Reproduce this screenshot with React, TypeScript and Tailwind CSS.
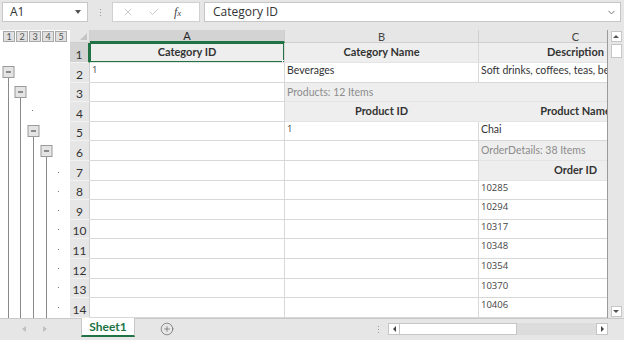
import React from "react";
import { X, Check, ChevronDown, CirclePlus } from "lucide-react";

type Cell = { t?: string; kind?: "head" | "num" | "text" | "caption"; merge?: boolean };

const rows: { h: number; cells: Cell[] }[] = [
  { h: 20, cells: [{ t: "Category ID", kind: "head" }, { t: "Category Name", kind: "head" }, { t: "Description", kind: "head" }] },
  { h: 20, cells: [{ t: "1", kind: "num" }, { t: "Beverages" }, { t: "Soft drinks, coffees, teas, beers, and ales" }] },
  { h: 19, cells: [{}, { t: "Products: 12 Items", kind: "caption", merge: true }, { kind: "caption" }] },
  { h: 20, cells: [{}, { t: "Product ID", kind: "head", merge: true }, { t: "Product Name", kind: "head" }] },
  { h: 19, cells: [{}, { t: "1", kind: "num" }, { t: "Chai" }] },
  { h: 20, cells: [{}, {}, { t: "OrderDetails: 38 Items", kind: "caption" }] },
  { h: 20, cells: [{}, {}, { t: "Order ID", kind: "head" }] },
  { h: 19, cells: [{}, {}, { t: "10285", kind: "num" }] },
  { h: 20, cells: [{}, {}, { t: "10294", kind: "num" }] },
  { h: 19, cells: [{}, {}, { t: "10317", kind: "num" }] },
  { h: 20, cells: [{}, {}, { t: "10348", kind: "num" }] },
  { h: 20, cells: [{}, {}, { t: "10354", kind: "num" }] },
  { h: 19, cells: [{}, {}, { t: "10370", kind: "num" }] },
  { h: 20, cells: [{}, {}, { t: "10406", kind: "num" }] },
];

const colW = ["w-[195px]", "w-[194px]", "w-[194px]"];

const OutlineBox = ({ x, y }: { x: number; y: number }) => (
  <g>
    <rect x={x} y={y} width="11" height="11" fill="#e4e4e4" stroke="#9a9a9a" />
    <line x1={x + 3} y1={y + 5.5} x2={x + 8} y2={y + 5.5} stroke="#333" />
  </g>
);

const Outline = () => {
  const dotsY = [129, 148, 167, 186, 206, 225, 244, 264];
  return (
    <svg width="70" height="275" className="block">
      <line x1="8.5" y1="35" x2="8.5" y2="275" stroke="#8a8a8a" />
      <line x1="20.5" y1="55" x2="20.5" y2="275" stroke="#8a8a8a" />
      <line x1="33.5" y1="94" x2="33.5" y2="275" stroke="#8a8a8a" />
      <line x1="46.5" y1="114" x2="46.5" y2="275" stroke="#8a8a8a" />
      <OutlineBox x={3} y={23.5} />
      <OutlineBox x={15} y={43.5} />
      <rect x="32" y="67" width="1" height="1" fill="#777" />
      <OutlineBox x={28} y={82.5} />
      <OutlineBox x={41} y={102.5} />
      {dotsY.map((y) => (
        <rect key={y} x="58" y={y} width="1" height="1" fill="#777" />
      ))}
    </svg>
  );
};

const DataCell = ({ c, i, row }: { c: Cell; i: number; row: number }) => {
  const gray = c.kind === "head" || c.kind === "caption";
  const selected = row === 0 && i === 0;
  let cls = `${colW[i]} shrink-0 h-full flex overflow-hidden whitespace-nowrap border-b `;
  cls += c.merge ? "border-r border-r-transparent " : "border-r border-r-[#d8d8d8] ";
  cls += gray ? "bg-[#eeeeee] border-b-[#e4e4e4] " : "bg-white border-b-[#d8d8d8] ";
  if (c.kind === "head") cls += "items-center justify-center font-bold text-[11px] text-[#333]";
  else if (c.kind === "caption") cls += "items-start pt-[2px] pl-[2px] text-[10.5px] text-[#8c8c8c]";
  else if (c.kind === "num") cls += "items-start pt-0 pl-[2px] text-[9.5px] text-[#444] font-['Open_Sans',sans-serif]";
  else cls += "items-start pt-0 pl-[2px] text-[10.5px] text-[#333]";
  return (
    <div className={`${cls} ${selected ? "relative" : ""}`}>
      {c.t}
      {selected && (
        <>
          <div className="absolute inset-[-1px] border-2 border-[#217346]" />
          <div className="absolute right-[-3px] bottom-[-3px] w-[5px] h-[5px] bg-[#217346] border border-white" />
        </>
      )}
    </div>
  );
};

export default function App() {
  return (
    <div className="w-[624px] h-[340px] bg-[#e6e6e6] flex flex-col overflow-hidden font-['Lato',sans-serif] text-[#333]">
      {/* formula bar */}
      <div className="h-[30px] shrink-0 flex items-start pt-[2px] pl-[2px] font-['Open_Sans',sans-serif]">
        <div className="w-[86px] h-[20px] bg-white border border-[#c6c6c6] flex items-center pl-[7px] pr-[6px] text-[12px]">
          <span className="flex-1">A1</span>
          <span className="w-0 h-0 border-l-[3px] border-r-[3px] border-t-[4px] border-l-transparent border-r-transparent border-t-[#555]" />
        </div>
        <div className="w-[24px] h-[20px] flex flex-col items-center justify-center gap-[2px]">
          <span className="w-[1px] h-[1px] bg-[#999]" />
          <span className="w-[1px] h-[1px] bg-[#999]" />
          <span className="w-[1px] h-[1px] bg-[#999]" />
        </div>
        <div className="w-[88px] h-[20px] bg-white border border-[#d0d0d0] flex items-center pl-[9px] gap-[14px]">
          <X size={12} strokeWidth={1.4} color="#b5b5b5" />
          <Check size={12} strokeWidth={1.4} color="#b5b5b5" />
          <span className="font-['Liberation_Serif',serif] italic text-[12px] text-[#444]">
            f<span className="text-[9px]">x</span>
          </span>
        </div>
        <div className="ml-[4px] w-[417px] h-[20px] bg-white border border-[#c6c6c6] flex items-center pl-[8px] pr-[3px] text-[12px]">
          <span className="flex-1">Category ID</span>
          <ChevronDown size={11} strokeWidth={2} color="#666" />
        </div>
      </div>

      {/* sheet area */}
      <div className="h-[288px] shrink-0 flex">
        <div className="w-[70px] shrink-0 bg-white flex flex-col">
          <div className="h-[13px] flex items-center pl-[3px]">
            {[1, 2, 3, 4, 5].map((n) => (
              <div
                key={n}
                className="w-[12px] h-[11px] mr-[1px] bg-[#e0e0e0] border border-[#a8a8a8] flex items-center justify-center text-[9px] leading-none text-[#555]"
              >
                {n}
              </div>
            ))}
          </div>
          <Outline />
        </div>

        <div className="w-[538px] shrink-0 bg-white flex flex-col overflow-hidden border-r border-[#9a9a9a]">
          {/* column header */}
          <div className="h-[13px] shrink-0 flex text-[11px] leading-none">
            <div className="w-[20px] shrink-0 bg-[#e6e6e6] border-r border-b border-[#cfcfcf] flex items-end justify-end pr-[2px] pb-[2px]">
              <svg width="7" height="7" className="block">
                <polygon points="7,0 7,7 0,7" fill="#c4c4c4" />
              </svg>
            </div>
            {["A", "B", "C"].map((l, i) => (
              <div
                key={l}
                className={`${colW[i]} shrink-0 flex items-center justify-center border-r border-[#cfcfcf] ${
                  i === 0 ? "bg-[#d3d3d3] border-b-2 border-b-[#217346] text-[#222]" : "bg-[#e6e6e6] border-b text-[#444]"
                }`}
              >
                {l}
              </div>
            ))}
          </div>
          {rows.map((r, ri) => (
            <div key={ri} className="flex shrink-0" style={{ height: r.h }}>
              <div
                className={`w-[20px] shrink-0 flex items-end justify-center pb-[1px] text-[12px] leading-none border-b border-[#f2f2f2] ${
                  ri === 0 ? "bg-[#d3d3d3] border-r-2 border-r-[#217346]" : "bg-[#e6e6e6] border-r border-r-[#cfcfcf]"
                }`}
              >
                {ri + 1}
              </div>
              {[0, 1, 2].map((i) => (
                <DataCell key={i} c={r.cells[i] || {}} i={i} row={ri} />
              ))}
            </div>
          ))}
        </div>

        {/* vertical scrollbar */}
        <div className="w-[16px] shrink-0 flex flex-col items-center pt-[1px] pb-[1px]">
          <div className="w-[11px] h-[11px] bg-white border border-[#c6c6c6] flex items-center justify-center">
            <span className="w-0 h-0 border-l-[3px] border-r-[3px] border-b-[3px] border-l-transparent border-r-transparent border-b-[#555]" />
          </div>
          <div className="mt-[2px] w-[11px] h-[14px] bg-white border border-[#c6c6c6]" />
          <div className="flex-1" />
          <div className="w-[11px] h-[11px] bg-white border border-[#c6c6c6] flex items-center justify-center">
            <span className="w-0 h-0 border-l-[3px] border-r-[3px] border-t-[3px] border-l-transparent border-r-transparent border-t-[#555]" />
          </div>
        </div>
      </div>

      {/* sheet tabs */}
      <div className="h-[22px] shrink-0 flex items-start border-t border-[#c8c8c8]">
        <div className="w-[81px] h-[20px] flex items-center pl-[22px] gap-[17px]">
          <span className="w-0 h-0 border-t-[3px] border-b-[3px] border-r-[4px] border-t-transparent border-b-transparent border-r-[#c0c0c0]" />
          <span className="w-0 h-0 border-t-[3px] border-b-[3px] border-l-[4px] border-t-transparent border-b-transparent border-l-[#c0c0c0]" />
        </div>
        <div className="w-[54px] h-[19px] mt-[-1px] bg-white border-x border-[#c8c8c8] border-b-2 border-b-[#217346] flex items-center justify-center font-bold text-[12px] text-[#217346]">
          Sheet1
        </div>
        <div className="w-[64px] h-[20px] flex items-center justify-center">
          <CirclePlus size={14} strokeWidth={1.2} color="#666" />
        </div>
        <div className="flex-1" />
        <div className="w-[20px] h-[20px] flex flex-col items-center justify-center gap-[2px]">
          <span className="w-[1px] h-[1px] bg-[#999]" />
          <span className="w-[1px] h-[1px] bg-[#999]" />
          <span className="w-[1px] h-[1px] bg-[#999]" />
        </div>
        <div className="w-[220px] h-[12px] mt-[4px] mr-[16px] flex">
          <div className="w-[12px] h-full bg-white border border-[#c6c6c6] flex items-center justify-center">
            <span className="w-0 h-0 border-t-[3px] border-b-[3px] border-r-[3px] border-t-transparent border-b-transparent border-r-[#444]" />
          </div>
          <div className="w-[117px] h-full bg-white border-y border-r border-[#c6c6c6]" />
          <div className="flex-1 h-full bg-[#dcdcdc]" />
          <div className="w-[12px] h-full bg-white border border-[#c6c6c6] flex items-center justify-center">
            <span className="w-0 h-0 border-t-[3px] border-b-[3px] border-l-[3px] border-t-transparent border-b-transparent border-l-[#444]" />
          </div>
        </div>
      </div>
    </div>
  );
}
